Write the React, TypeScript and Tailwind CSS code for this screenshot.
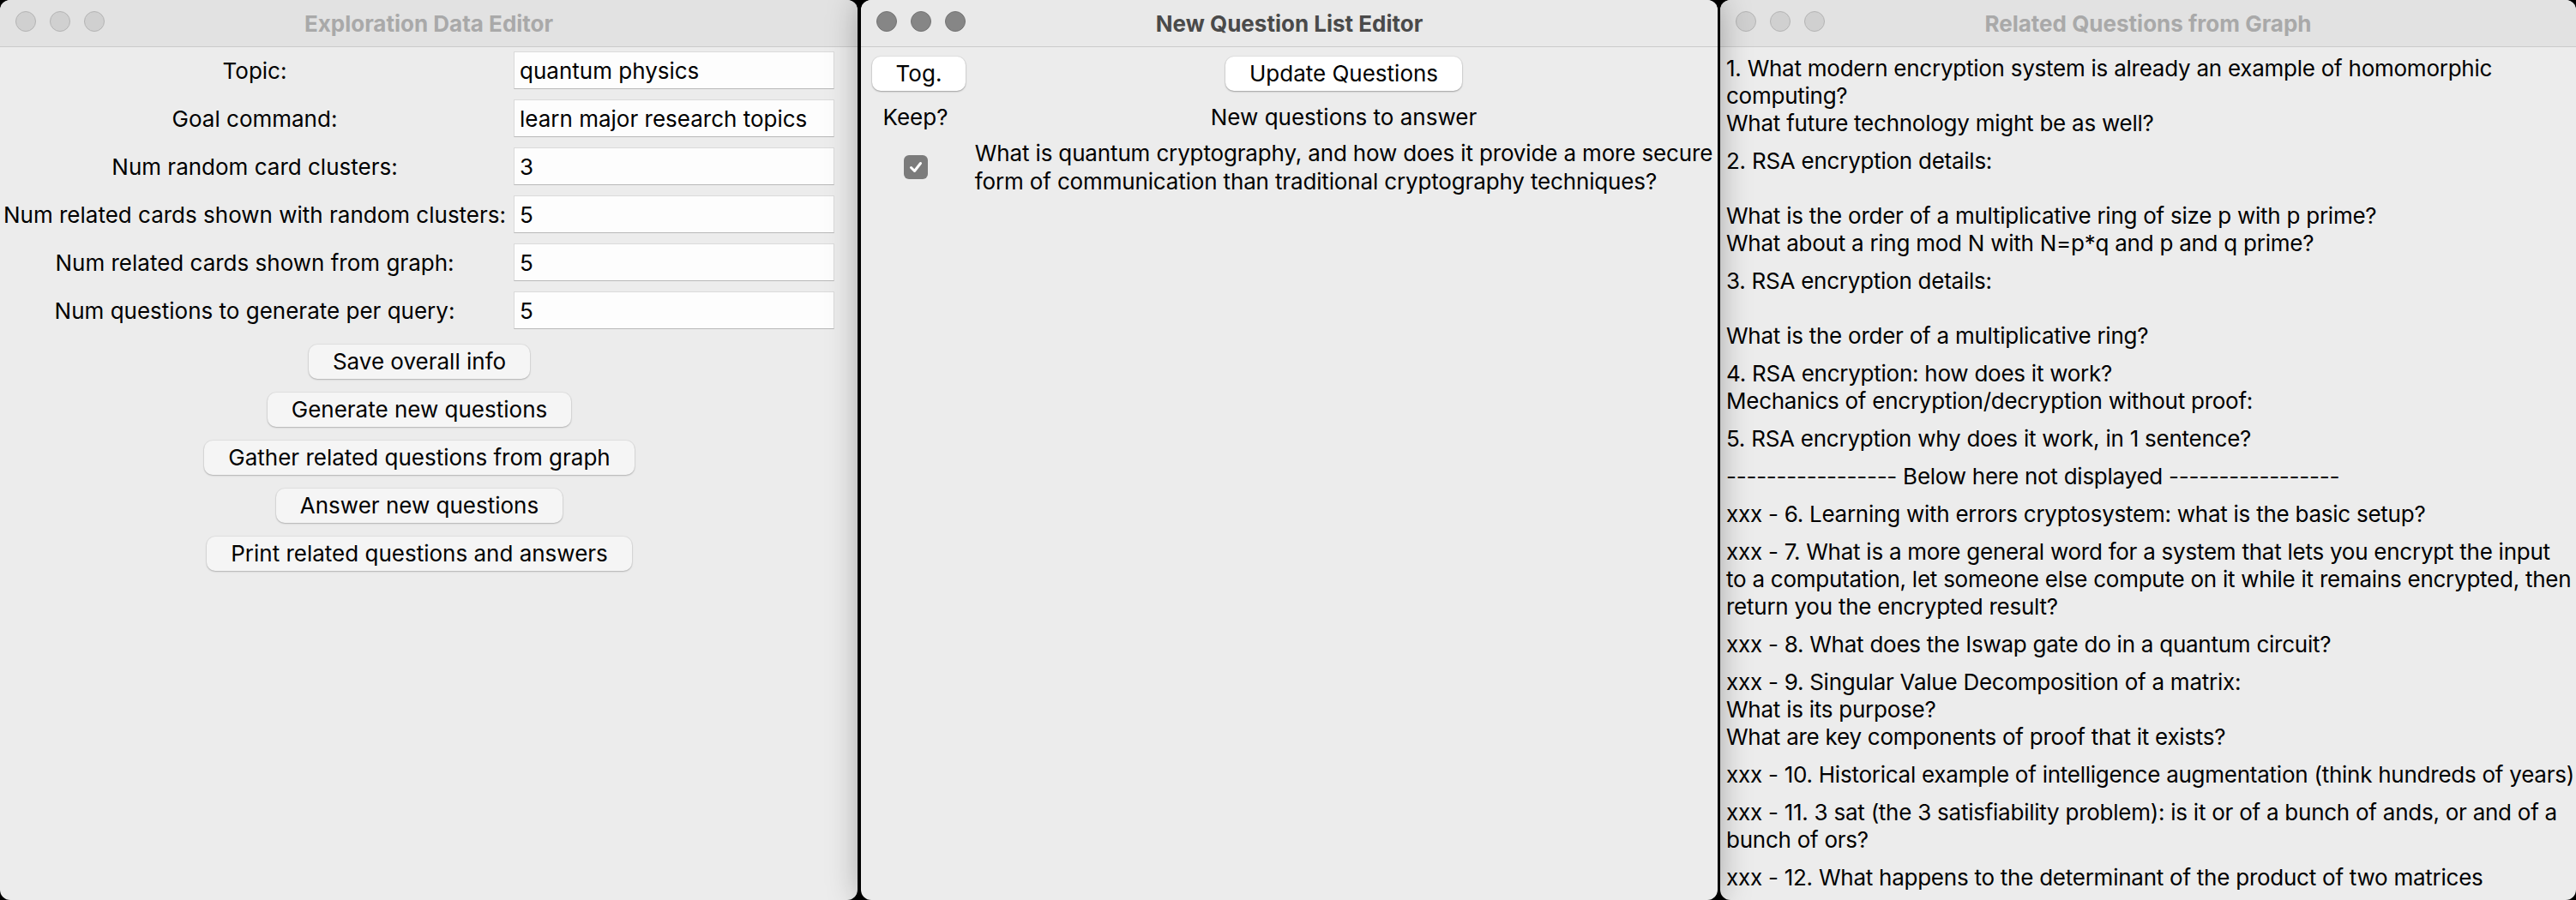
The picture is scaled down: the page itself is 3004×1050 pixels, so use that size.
const fields = [
  ["Topic:", "quantum physics"],
  ["Goal command:", "learn major research topics"],
  ["Num random card clusters:", "3"],
  ["Num related cards shown with random clusters:", "5"],
  ["Num related cards shown from graph:", "5"],
  ["Num questions to generate per query:", "5"],
];

const actions = [
  "Save overall info",
  "Generate new questions",
  "Gather related questions from graph",
  "Answer new questions",
  "Print related questions and answers",
];

const related: string[][] = [
  [
    "1. What modern encryption system is already an example of homomorphic",
    "computing?",
    "What future technology might be as well?",
  ],
  [
    "2. RSA encryption details:",
    "",
    "What is the order of a multiplicative ring of size p with p prime?",
    "What about a ring mod N with N=p*q and p and q prime?",
  ],
  ["3. RSA encryption details:", "", "What is the order of a multiplicative ring?"],
  ["4. RSA encryption: how does it work?", "Mechanics of encryption/decryption without proof:"],
  ["5. RSA encryption why does it work, in 1 sentence?"],
  ["----------------- Below here not displayed -----------------"],
  ["xxx - 6. Learning with errors cryptosystem: what is the basic setup?"],
  [
    "xxx - 7. What is a more general word for a system that lets you encrypt the input",
    "to a computation, let someone else compute on it while it remains encrypted, then",
    "return you the encrypted result?",
  ],
  ["xxx - 8. What does the Iswap gate do in a quantum circuit?"],
  [
    "xxx - 9. Singular Value Decomposition of a matrix:",
    "What is its purpose?",
    "What are key components of proof that it exists?",
  ],
  ["xxx - 10. Historical example of intelligence augmentation (think hundreds of years)"],
  [
    "xxx - 11. 3 sat (the 3 satisfiability problem): is it or of a bunch of ands, or and of a",
    "bunch of ors?",
  ],
  ["xxx - 12. What happens to the determinant of the product of two matrices"],
];

function TitleBar({ title, active }: { title: string; active?: boolean }) {
  return (
    <div
      className={
        active
          ? "relative flex h-[55px] items-center justify-center border-b border-[#cbcbcb] bg-[#e9e9e9]"
          : "relative flex h-[55px] items-center justify-center border-b border-[#cbcbcb] bg-[#e2e2e2]"
      }
    >
      <div className="absolute left-[18px] top-[13px] flex gap-[16px]">
        {[0, 1, 2].map((i) => (
          <span
            key={i}
            className={
              active
                ? "h-[24px] w-[24px] rounded-full border border-[#747474] bg-[#868686]"
                : "h-[24px] w-[24px] rounded-full border border-[#b4b4b4] bg-[#d0d0d0]"
            }
          />
        ))}
      </div>
      <span
        className={
          active
            ? "text-[26px] font-bold text-[#4a4a4a]"
            : "text-[26px] font-bold text-[#a9a9a9]"
        }
      >
        {title}
      </span>
    </div>
  );
}

function MacButton({ label, active }: { label: string; active?: boolean }) {
  return (
    <button
      className={
        active
          ? "h-[40px] rounded-[10px] bg-white px-[28px] text-[26px] leading-none text-black shadow-[0_1px_2px_rgba(0,0,0,0.3),0_0_0_1px_rgba(0,0,0,0.04)]"
          : "h-[40px] rounded-[10px] bg-[#f5f5f5] px-[28px] text-[26px] leading-none text-black shadow-[0_1px_2px_rgba(0,0,0,0.22),0_0_0_1px_rgba(0,0,0,0.04)]"
      }
    >
      {label}
    </button>
  );
}

export default function App() {
  return (
    <div className="flex h-[1050px] w-[3004px] overflow-hidden bg-black font-['Inter','Liberation_Sans',sans-serif] text-black">
      {/* Exploration Data Editor */}
      <div className="h-[1050px] w-[1000px] shrink-0 overflow-hidden rounded-[12px] bg-[#ececec]">
        <TitleBar title="Exploration Data Editor" />
        <div className="w-[978px] pt-[5px]">
          <div className="grid grid-cols-[594px_374px] gap-x-[5px] gap-y-[12px]">
            {fields.map(([label, value]) => (
              <div key={label} className="contents">
                <div className="flex h-[44px] items-center justify-center whitespace-nowrap text-[26px]">
                  {label}
                </div>
                <div className="flex h-[44px] items-center border border-[#dadada] border-b-[#b9b9b9] bg-[#fdfdfd] px-[6px] text-[26px]">
                  {value}
                </div>
              </div>
            ))}
          </div>
          <div className="mt-[18px] flex flex-col items-center gap-[16px]">
            {actions.map((a) => (
              <MacButton key={a} label={a} />
            ))}
          </div>
        </div>
      </div>

      {/* New Question List Editor */}
      <div className="relative z-10 ml-[4px] h-[1050px] w-[999px] shrink-0 overflow-hidden rounded-[12px] bg-[#ececec] shadow-[0_0_38px_rgba(0,0,0,0.35)]">
        <TitleBar title="New Question List Editor" active />
        <div className="grid grid-cols-[127px_1fr] pt-[11px] text-[26px]">
          <div className="flex h-[40px] justify-center pl-[8px]">
            <MacButton label="Tog." active />
          </div>
          <div className="flex h-[40px] justify-center">
            <MacButton label="Update Questions" active />
          </div>
          <div className="mt-[14px] flex h-[32px] items-center justify-center">Keep?</div>
          <div className="mt-[14px] flex h-[32px] items-center justify-center">New questions to answer</div>
          <div className="mt-[10px] flex items-center justify-center">
            <span className="flex h-[28px] w-[28px] items-center justify-center rounded-[6px] bg-[#7b7b7b]">
              <svg width="18" height="18" viewBox="0 0 18 18" fill="none">
                <path d="M3.5 9.5 L7.5 13.5 L14.5 4.5" stroke="white" strokeWidth="3" strokeLinecap="round" strokeLinejoin="round" />
              </svg>
            </span>
          </div>
          <div className="mt-[10px] flex justify-center">
            <div className="whitespace-nowrap leading-[33px] tracking-[-0.15px]">
              <div>What is quantum cryptography, and how does it provide a more secure</div>
              <div>form of communication than traditional cryptography techniques?</div>
            </div>
          </div>
        </div>
      </div>

      {/* Related Questions from Graph */}
      <div className="ml-[3px] h-[1050px] flex-1 overflow-hidden rounded-[12px] bg-[#ececec]">
        <TitleBar title="Related Questions from Graph" />
        <div className="flex flex-col gap-[12px] px-[7px] pt-[9px] text-[26px] leading-[32px] tracking-[-0.25px]">
          {related.map((block, i) => (
            <div key={i}>
              {block.map((line, j) => (
                <div key={j} className="h-[32px] whitespace-nowrap">
                  {line}
                </div>
              ))}
            </div>
          ))}
        </div>
      </div>
    </div>
  );
}
